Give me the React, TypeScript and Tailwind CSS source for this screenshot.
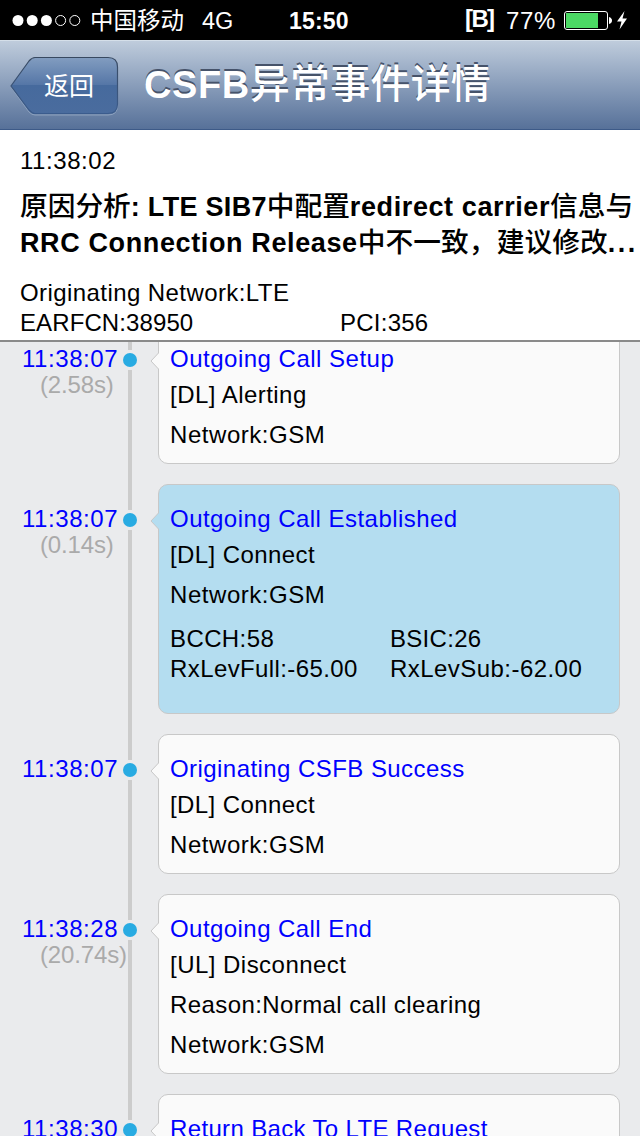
import React from "react";
import clsx from "clsx";

interface TextLine {
  text: string;
  tracking: string;
}

interface CallEvent {
  time: string;
  duration?: string;
  title: TextLine;
  lines: TextLine[];
  params?: TextLine[];
  height: string;
  active?: boolean;
}

const network: TextLine = { text: "Network:GSM", tracking: "tracking-[0.55px]" };
const connect: TextLine = { text: "[DL] Connect", tracking: "tracking-[0.42px]" };

const events: CallEvent[] = [
  {
    time: "11:38:07",
    duration: "(2.58s)",
    title: { text: "Outgoing Call Setup", tracking: "tracking-[0.5px]" },
    lines: [{ text: "[DL] Alerting", tracking: "tracking-[0.46px]" }, network],
    height: "h-[140px]",
  },
  {
    time: "11:38:07",
    duration: "(0.14s)",
    title: { text: "Outgoing Call Established", tracking: "tracking-[0.46px]" },
    lines: [connect, network],
    params: [
      { text: "BCCH:58", tracking: "tracking-[0.4px]" },
      { text: "BSIC:26", tracking: "tracking-[0.3px]" },
      { text: "RxLevFull:-65.00", tracking: "tracking-[0.4px]" },
      { text: "RxLevSub:-62.00", tracking: "tracking-[0.45px]" },
    ],
    height: "h-[230px]",
    active: true,
  },
  {
    time: "11:38:07",
    title: { text: "Originating CSFB Success", tracking: "tracking-[0.44px]" },
    lines: [connect, network],
    height: "h-[140px]",
  },
  {
    time: "11:38:28",
    duration: "(20.74s)",
    title: { text: "Outgoing Call End", tracking: "tracking-[0.44px]" },
    lines: [
      { text: "[UL] Disconnect", tracking: "tracking-[0.47px]" },
      { text: "Reason:Normal call clearing", tracking: "tracking-[0.41px]" },
      network,
    ],
    height: "h-[180px]",
  },
  {
    time: "11:38:30",
    title: { text: "Return Back To LTE Request", tracking: "tracking-[0.35px]" },
    lines: [],
    height: "h-[140px]",
  },
];

const StatusBar = () => (
  <div className="flex h-10 shrink-0 items-center bg-black text-[24px] leading-10 text-white">
    <svg className="ml-3 shrink-0" width="70" height="40" viewBox="0 0 70 40">
      <circle cx="6" cy="20.5" r="5.5" fill="white" />
      <circle cx="20.2" cy="20.5" r="5.5" fill="white" />
      <circle cx="34.4" cy="20.5" r="5.5" fill="white" />
      <circle cx="48.6" cy="20.5" r="5" fill="none" stroke="white" />
      <circle cx="62.8" cy="20.5" r="5" fill="none" stroke="white" />
    </svg>
    <span className="ml-2 w-[112px] pt-[2px] text-[23.5px]">中国移动</span>
    <span className="w-[87px] pt-px text-[23.5px]">4G</span>
    <span className="w-[176px] pt-px text-[23px] font-bold tracking-[0.2px]">15:50</span>
    <span className="w-[41px] pb-[2px] text-[24px] font-bold tracking-[-1.6px]">[B]</span>
    <span className="w-[57px] pt-px tracking-[0.6px]">77%</span>
    <svg className="shrink-0" width="70" height="40" viewBox="0 0 70 40">
      <rect x="1.5" y="11.5" width="43" height="18" rx="2.5" fill="none" stroke="white" />
      <rect x="3" y="13" width="32" height="15" fill="#4cd964" />
      <path d="M46 17 Q49 18 49 20.5 Q49 23 46 24 Z" fill="white" />
      <path d="M61.5 11 L54 21.5 H58.5 L56.5 29.500 L64 18.5 H59.500 Z" fill="white" />
    </svg>
  </div>
);

const TitleBar = () => (
  <header className="flex h-[90px] shrink-0 border-b border-t border-b-[#3d5a88] border-t-[#d5dfe9] bg-linear-to-b from-[#bfccdc] to-[#577199]">
    <button type="button" className="relative ml-[10px] mt-[15px] h-[60px] w-[109px] text-left">
      <svg className="absolute inset-0" width="109" height="60" viewBox="0 0 109 60">
        <defs>
          <linearGradient id="back" x1="0" y1="0" x2="0" y2="1">
            <stop offset="0" stopColor="#829dc0" />
            <stop offset="0.5" stopColor="#5475a6" />
            <stop offset="0.5" stopColor="#466a9d" />
            <stop offset="1" stopColor="#4a6c9e" />
          </linearGradient>
          <linearGradient id="rim" x1="0" y1="0" x2="0" y2="1">
            <stop offset="0" stopColor="#384960" />
            <stop offset="1" stopColor="#3b5c8d" />
          </linearGradient>
        </defs>
        <path
          d="M25 2.5 H98 Q107.500 2.500 107.500 12 V50 Q107.500 59 98 59 H25 Q22 59 19 56 L1 31 L19 6 Q22 2.500 25 2.500 Z"
          fill="none"
          stroke="#9db0ca"
          strokeOpacity="0.7"
        />
        <path
          d="M25 1.5 H98 Q107.500 1.500 107.500 11 V48 Q107.500 57.500 98 57.500 H25 Q22 57.500 19 54 L1 30 L19 5 Q22 1.500 25 1.500 Z"
          fill="url(#back)"
          stroke="url(#rim)"
          strokeWidth="1.2"
        />
      </svg>
      <span className="relative ml-[34px] block text-[25px] leading-[54px] text-white">返回</span>
    </button>
    <h1 className="ml-[25px] whitespace-nowrap text-[38px] font-bold leading-[87px] text-white [text-shadow:0_-2px_0_#46536a]">
      <span className="tracking-[0.6px]">CSFB</span>
      <span className="text-[40px] font-medium tracking-[0.2px]">异常事件详情</span>
    </h1>
  </header>
);

const Summary = () => (
  <section className="h-[212px] shrink-0 border-b-2 border-[#8a8a8a] bg-white pl-5 pt-4">
    <p className="leading-[30px] tracking-[0.55px]">11:38:02</p>
    <div className="mt-[13px] whitespace-nowrap text-[27px] font-bold leading-9">
      <p className="h-9">
        <span className="text-[27.7px] font-medium">原因分析</span>
        <span className="tracking-[0.3px]">: LTE SIB7</span>
        <span className="text-[27.7px] font-medium">中配置</span>
        <span className="tracking-[0.6px]">redirect carrier</span>
        <span className="text-[27.7px] font-medium">信息与</span>
      </p>
      <p className="h-9">
        <span className="tracking-[0.62px]">RRC Connection Release</span>
        <span className="text-[27.7px] font-medium tracking-[0.1px]">中不一致，建议修改</span>
        <span className="tracking-[2.5px]">...</span>
      </p>
    </div>
    <div className="mt-[17px] grid grid-cols-[320px_1fr] leading-[30px]">
      <p className="col-span-2 tracking-[0.42px]">Originating Network:LTE</p>
      <p className="tracking-[0.1px]">EARFCN:38950</p>
      <p className="tracking-[0.25px]">PCI:356</p>
    </div>
  </section>
);

const Rail = () => (
  <div className="flex w-5 shrink-0 flex-col items-center">
    <div className="h-[26px] w-1 bg-[#cccccc]" />
    <div className="flex h-5 items-center">
      <div className="h-[14px] w-[14px] rounded-full bg-[#29abe2]" />
    </div>
    <div className="w-1 flex-1 bg-[#cccccc]" />
  </div>
);

const EventRow = ({ time, duration, title, lines, params, height, active }: CallEvent) => (
  <div className="flex shrink-0">
    <div className="w-[120px] shrink-0 whitespace-nowrap pl-[22px] pt-[22px] leading-[26px]">
      <p className="tracking-[0.55px] text-[#0000ff]">{time}</p>
      {duration && <p className="pl-[18px] tracking-[-0.15px] text-[#aaaaaa]">{duration}</p>}
    </div>
    <Rail />
    <div
      className={clsx(
        "relative mb-5 ml-[18px] w-[462px] shrink-0 whitespace-nowrap rounded-[10px] border border-[#c8c8c8] pl-[11px] pt-4",
        height,
        active ? "bg-[#b4ddf0]" : "bg-[#fafafa]"
      )}
    >
      <svg className="absolute -left-[9px] top-[27px]" width="10" height="18" viewBox="0 0 10 18">
        <path
          d="M10 1 H8.500 L1 9 L8.500 17 H10 Z"
          className={active ? "fill-[#b4ddf0]" : "fill-[#fafafa]"}
        />
        <path d="M8.500 1 L1 9 L8.500 17" fill="none" stroke="#c8c8c8" />
      </svg>
      <p className={clsx("leading-9 text-[#0000ff]", title.tracking)}>{title.text}</p>
      {lines.map((line, index) => (
        <p key={index} className={clsx("leading-10", index === 0 && "-mt-[2px]", line.tracking)}>
          {line.text}
        </p>
      ))}
      {params && (
        <div className="mt-[9px] grid grid-cols-[220px_1fr] leading-[30px]">
          {params.map((param) => (
            <p key={param.text} className={param.tracking}>
              {param.text}
            </p>
          ))}
        </div>
      )}
    </div>
  </div>
);

export default function App() {
  return (
    <div className="flex h-[1136px] w-[640px] flex-col overflow-hidden bg-[#eaebed] font-['Liberation_Sans','Noto_Sans_CJK_SC',sans-serif] text-[24px] text-black">
      <StatusBar />
      <TitleBar />
      <Summary />
      <main className="min-h-0 flex-1 overflow-hidden">
        <div className="-mt-[18px] flex flex-col">
          {events.map((event, index) => (
            <EventRow key={index} {...event} />
          ))}
        </div>
      </main>
    </div>
  );
}
